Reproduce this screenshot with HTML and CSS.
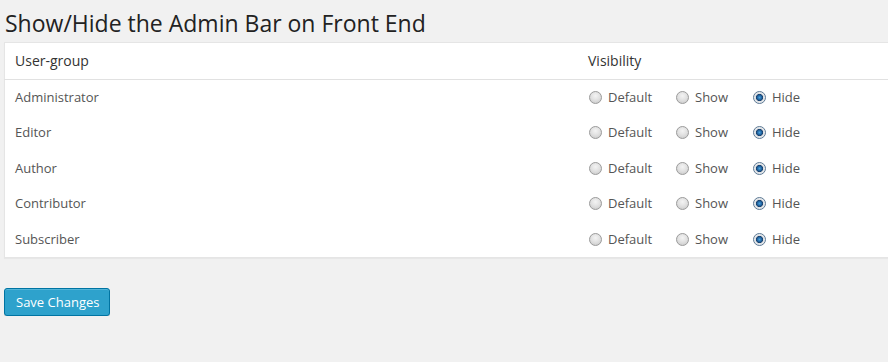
FILE: index.html
```html
<!DOCTYPE html>
<html>
<head>
<meta charset="utf-8">
<link rel="stylesheet" href="styles.css">
</head>
<body>
<div class="wrap">
  <h2 class="title">Show/Hide the Admin Bar on Front End</h2>
  <table class="widefat">
    <thead>
      <tr><th class="col-group">User-group</th><th>Visibility</th></tr>
    </thead>
    <tbody>
      <tr><td>Administrator</td><td class="opts"><span class="opt"><span class="radio"></span>Default</span><span class="opt"><span class="radio"></span>Show</span><span class="opt"><span class="radio checked"></span>Hide</span></td></tr>
      <tr><td>Editor</td><td class="opts"><span class="opt"><span class="radio"></span>Default</span><span class="opt"><span class="radio"></span>Show</span><span class="opt"><span class="radio checked"></span>Hide</span></td></tr>
      <tr><td>Author</td><td class="opts"><span class="opt"><span class="radio"></span>Default</span><span class="opt"><span class="radio"></span>Show</span><span class="opt"><span class="radio checked"></span>Hide</span></td></tr>
      <tr><td>Contributor</td><td class="opts"><span class="opt"><span class="radio"></span>Default</span><span class="opt"><span class="radio"></span>Show</span><span class="opt"><span class="radio checked"></span>Hide</span></td></tr>
      <tr><td>Subscriber</td><td class="opts"><span class="opt"><span class="radio"></span>Default</span><span class="opt"><span class="radio"></span>Show</span><span class="opt"><span class="radio checked"></span>Hide</span></td></tr>
    </tbody>
  </table>
  <div class="submit"><button class="button-primary">Save Changes</button></div>
</div>
</body>
</html>
```

FILE: styles.css
```css
html, body {
  margin: 0;
  padding: 0;
  background: #f1f1f1;
  overflow: hidden;
}
body {
  font-family: "Open Sans", sans-serif;
  color: #444;
  font-size: 13px;
}
.wrap {
  padding-left: 4px;
  width: 930px;
}
.title {
  font-family: "Open Sans", sans-serif;
  font-weight: 400;
  font-size: 23px;
  line-height: 29px;
  color: #222;
  margin: 0;
  padding: 9px 0 4px 1px;
}
.widefat {
  width: 100%;
  border-collapse: collapse;
  background: #fff;
  border: 1px solid #e5e5e5;
  box-shadow: 0 1px 1px rgba(0,0,0,0.04);
}
.widefat th {
  text-align: left;
  font-weight: 400;
  font-size: 14px;
  line-height: 19.6px;
  color: #333;
  padding: 8px 10px 8px 10px;
  border-bottom: 1px solid #e1e1e1;
}
.col-group {
  width: 553px;
}
.widefat td {
  font-size: 13px;
  line-height: 19.5px;
  color: #555;
  padding: 8px 10px;
}
.opts {
  display: flex;
  align-items: center;
  padding-left: 11px !important;
}
.opt {
  display: inline-flex;
  align-items: center;
}
.opt:nth-child(1) { width: 87px; }
.opt:nth-child(2) { width: 77px; }
.radio {
  display: inline-block;
  width: 11px;
  height: 11px;
  border-radius: 50%;
  border: 1px solid #9c9c9c;
  background: radial-gradient(circle at 50% 35%, #f4f4f4 0%, #e0e0e0 50%, #c4c4c4 100%);
  margin-right: 6px;
  box-sizing: content-box;
}
.radio.checked {
  border-color: #5e7a95;
  background: radial-gradient(circle at 50% 50%, #4aa3e0 0%, #1e5f9a 30%, #1a3f6a 42%, #dcdfe2 50%, #eef0f2 75%, #c9ccd0 100%);
}
.submit {
  padding-top: 30px;
}
.button-primary {
  font-family: "Open Sans", sans-serif;
  font-size: 13px;
  color: #fff;
  background: #2ea2cc;
  border: 1px solid #0074a2;
  border-radius: 3px;
  box-shadow: inset 0 1px 0 rgba(120,200,230,0.5), 0 1px 0 rgba(0,0,0,0.15);
  height: 28px;
  line-height: 26px;
  padding: 0 10px 1px 11px;
  margin: 0;
  cursor: pointer;
}
```
